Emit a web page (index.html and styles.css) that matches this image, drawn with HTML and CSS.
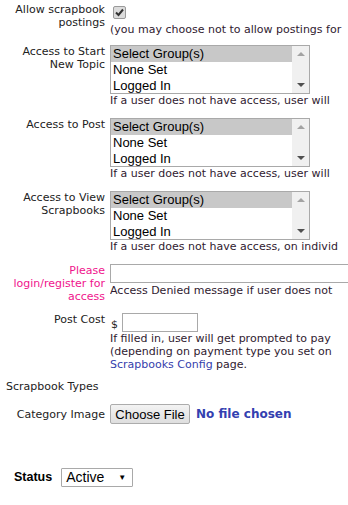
FILE: index.html
```html
<!DOCTYPE html>
<html lang="en">
<head>
<meta charset="UTF-8" />
<meta name="viewport" content="width=device-width, initial-scale=1.0"/>
<title>Scrapbook Settings</title>
<link rel="stylesheet" href="styles.css">
</head>
<body>
<div class="form">

  <div class="row row-allow">
    <div class="label">Allow scrapbook postings</div>
    <div class="field">
      <div class="check-line"><span class="checkbox"><svg width="11" height="11" viewBox="0 0 11 11"><path d="M2 5.5 L4.5 8 L9 2.5" fill="none" stroke="#333" stroke-width="2"/></svg></span></div>
      <div class="help">(you may choose not to allow postings for</div>
    </div>
  </div>

  <div class="row">
    <div class="label">Access to Start New Topic</div>
    <div class="field">
      <div class="listbox">
        <div class="options">
          <div class="opt selected">Select Group(s)</div>
          <div class="opt">None Set</div>
          <div class="opt">Logged In</div>
        </div>
        <div class="scroll"><span class="arr up"></span><span class="arr down"></span></div>
      </div>
      <div class="help">If a user does not have access, user will</div>
    </div>
  </div>

  <div class="row">
    <div class="label">Access to Post</div>
    <div class="field">
      <div class="listbox">
        <div class="options">
          <div class="opt selected">Select Group(s)</div>
          <div class="opt">None Set</div>
          <div class="opt">Logged In</div>
        </div>
        <div class="scroll"><span class="arr up"></span><span class="arr down"></span></div>
      </div>
      <div class="help">If a user does not have access, user will</div>
    </div>
  </div>

  <div class="row">
    <div class="label">Access to View Scrapbooks</div>
    <div class="field">
      <div class="listbox">
        <div class="options">
          <div class="opt selected">Select Group(s)</div>
          <div class="opt">None Set</div>
          <div class="opt">Logged In</div>
        </div>
        <div class="scroll"><span class="arr up"></span><span class="arr down"></span></div>
      </div>
      <div class="help">If a user does not have access, on individ</div>
    </div>
  </div>

  <div class="row row-denied">
    <div class="label pink">Please login/register for access</div>
    <div class="field">
      <input type="text" class="text wide">
      <div class="help denied-help">Access Denied message if user does not</div>
    </div>
  </div>

  <div class="row row-cost">
    <div class="label">Post Cost</div>
    <div class="field">
      <div class="cost-line"><span class="dollar">$</span><input type="text" class="text cost"></div>
      <div class="help">If filled in, user will get prompted to pay<br>(depending on payment type you set on<br><a href="#">Scrapbooks Config</a> page.</div>
    </div>
  </div>

  <div class="section">Scrapbook Types</div>

  <div class="row row-image">
    <div class="label">Category Image</div>
    <div class="field file-field">
      <button class="file-btn">Choose File</button>
      <span class="no-file">No file chosen</span>
    </div>
  </div>

  <div class="status">
    <span class="status-label">Status</span>
    <div class="select">Active<span class="caret">&#9660;</span></div>
  </div>

</div>
</body>
</html>
```

FILE: styles.css
```css
html, body {
  overflow: hidden;
}

body {
  margin: 0;
  background: #fff;
  color: #222;
  font-family: "DejaVu Sans", Verdana, sans-serif;
  font-size: 11px;
  line-height: 13px;
}

.form {
  padding-top: 3px;
  width: 348px;
}

.row {
  display: grid;
  grid-template-columns: 105px 1fr;
  column-gap: 5px;
  margin-bottom: 11px;
}

.label {
  text-align: right;
  padding-left: 8px;
}

.field {
  min-width: 0;
  overflow: hidden;
}

.pink {
  color: #f0148c;
}

.help {
  color: #301a30;
  white-space: nowrap;
}

.help a {
  color: #3540ac;
  text-decoration: none;
}

.row-allow {
  margin-bottom: 9px;
}

.check-line {
  height: 20px;
  padding: 3px 0 0 3px;
  box-sizing: border-box;
}

.checkbox {
  display: block;
  width: 11px;
  height: 11px;
  border: 1px solid #9a9a9a;
  border-radius: 2px;
  background: #dcdcdc;
}

.checkbox svg {
  display: block;
}

.listbox {
  display: flex;
  width: 200px;
  height: 49px;
  box-sizing: border-box;
  border: 1px solid #a9a9a9;
  font-family: "Liberation Sans", Arial, sans-serif;
  font-size: 13px;
  color: #000;
  overflow: hidden;
}

.options {
  flex: 1;
}

.opt {
  height: 16px;
  line-height: 16px;
  padding-left: 2px;
  white-space: nowrap;
}

.opt.selected {
  background: #c8c8c8;
}

.scroll {
  width: 17px;
  background: #f0f0f0;
  display: flex;
  flex-direction: column;
  justify-content: space-between;
  align-items: center;
  padding: 6px 0 6px;
}

.arr {
  width: 0;
  height: 0;
  border-left: 4px solid transparent;
  border-right: 4px solid transparent;
}

.arr.up {
  border-bottom: 4px solid #a3a3a3;
}

.arr.down {
  border-top: 4px solid #505050;
}

.row-denied {
  margin-bottom: 10px;
}

.text {
  display: block;
  box-sizing: border-box;
  height: 19px;
  margin: 0;
  border: 1px solid #a9a9a9;
  background: #fff;
  padding: 0 2px;
}

.wide {
  width: 300px;
}

.denied-help {
  margin-top: 1px;
}

.row-cost {
  margin-bottom: 9px;
}

.cost-line {
  display: flex;
  align-items: flex-end;
  height: 19px;
}

.dollar {
  padding: 0 4px 0 1px;
  line-height: 13px;
  margin-bottom: 1px;
}

.text.cost {
  width: 76px;
}

.section {
  padding-left: 6px;
  margin-bottom: 11px;
}

.row-image {
  align-items: center;
}

.row-image .label {
  padding-top: 1px;
}

.file-field {
  display: flex;
  align-items: center;
}

.file-btn {
  width: 80px;
  height: 20px;
  box-sizing: border-box;
  padding: 0;
  border: 1px solid #acacac;
  border-radius: 2px;
  background: linear-gradient(#f3f3f3, #dedede);
  font-family: "Liberation Sans", Arial, sans-serif;
  font-size: 13px;
  color: #000;
}

.no-file {
  margin-left: 6px;
  color: #3340b0;
  font-weight: bold;
  font-size: 12px;
}

.status {
  display: flex;
  align-items: center;
  margin-top: 44px;
  padding-left: 14px;
}

.status-label {
  font-family: "Liberation Sans", Arial, sans-serif;
  font-weight: bold;
  font-size: 12.5px;
  color: #000;
  margin-right: 9px;
}

.select {
  position: relative;
  width: 72px;
  height: 19px;
  box-sizing: border-box;
  border: 1px solid #a9a9a9;
  border-radius: 1px;
  padding-left: 4px;
  font-family: "Liberation Sans", Arial, sans-serif;
  font-size: 14px;
  line-height: 17px;
  color: #000;
}

.caret {
  position: absolute;
  right: 6px;
  top: 0;
  font-size: 8px;
}
```
